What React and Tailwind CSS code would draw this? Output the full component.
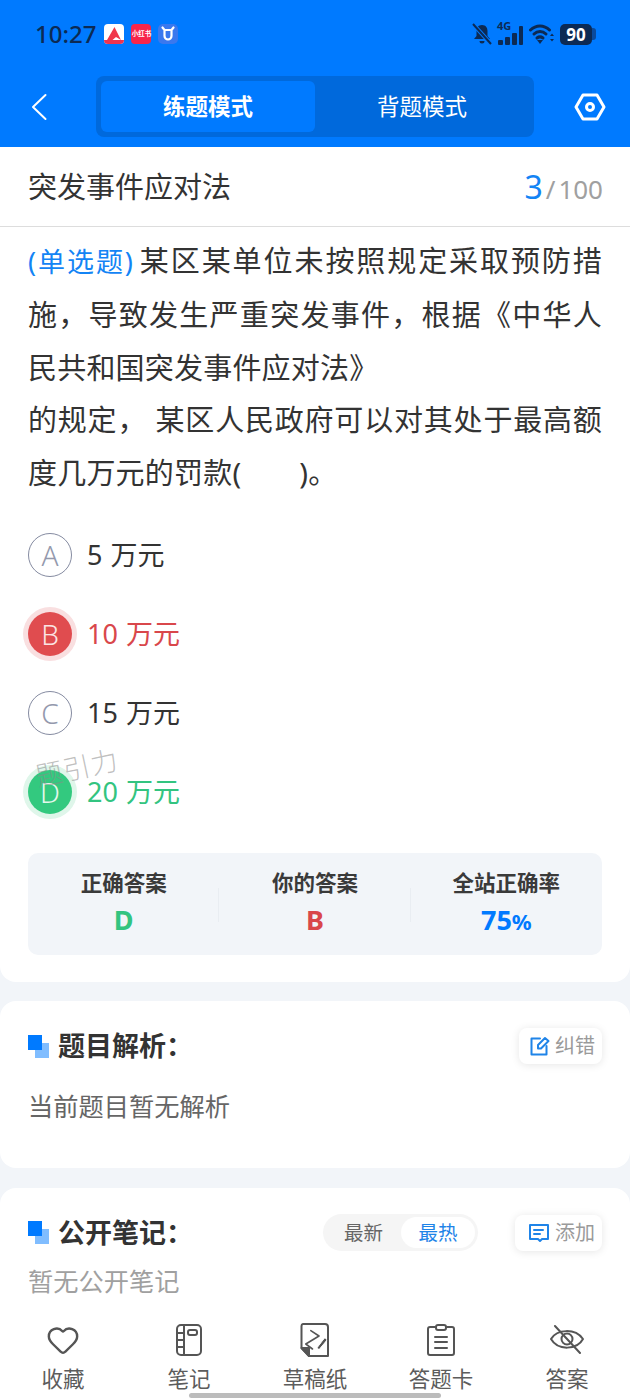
import React from "react";
import { Heart } from "lucide-react";

const font = { fontFamily: '"Noto Sans", "Noto Sans CJK SC", sans-serif' };

const options = [
  { key: "A", text: "5 万元", state: "idle" },
  { key: "B", text: "10 万元", state: "wrong" },
  { key: "C", text: "15 万元", state: "idle" },
  { key: "D", text: "20 万元", state: "right" },
];

const Option = ({ item }) => {
  let circle = "border-[1.5px] border-[#858ba1] text-[#9499ad]";
  let label = "text-[#333333]";
  if (item.state === "wrong") {
    circle = "bg-[#e04c4f] text-[#fbe4e4] shadow-[0_0_0_5px_#f9dfe0]";
    label = "text-[#d9474b]";
  }
  if (item.state === "right") {
    circle = "bg-[#33c97f] text-[#e3f8ec] shadow-[0_0_0_5px_#dff6ea]";
    label = "text-[#33c480]";
  }
  return (
    <div className="flex items-center h-[44px]">
      <div className={`w-[44px] h-[44px] rounded-full flex items-center justify-center text-[28px] font-light ${circle}`}>
        {item.key}
      </div>
      <div className={`ml-[15px] text-[27px] leading-[44px] [word-spacing:1px] ${label}`}>{item.text}</div>
    </div>
  );
};

const Stat = ({ title, children, line }) => (
  <div className="flex-1 flex flex-col items-center relative">
    <div className="text-[21.5px] leading-[30px] font-bold text-[#3a3a3a]">{title}</div>
    <div className="text-[27px] leading-[38px] font-bold mt-[3px]">{children}</div>
    {line && <div className="absolute right-0 top-[20px] w-[1px] h-[34px] bg-[#e9edf2]" />}
  </div>
);

const SectionTitle = ({ children }) => (
  <div className="flex items-center">
    <div className="relative w-[21px] h-[23px]">
      <div className="absolute left-[7px] top-[8px] w-[14px] h-[15px] bg-[#80bdff]" />
      <div className="absolute left-0 top-0 w-[14px] h-[15px] bg-[#007aff]" />
    </div>
    <div className="ml-[9px] text-[27px] leading-[36px] font-bold text-[#333333]">{children}</div>
  </div>
);

const ChipButton = ({ icon, label, wide }) => (
  <div className={`flex items-center justify-end pr-[7px] h-[36px] rounded-[8px] bg-white shadow-[0_1px_8px_rgba(0,0,0,0.1)] text-[20px] text-[#9a9a9a] ${wide ? "w-[87px]" : "w-[83px]"}`}>
    {icon}
    <span className="ml-[5px]">{label}</span>
  </div>
);

const Tab = ({ icon, label }) => (
  <div className="flex-1 flex flex-col items-center">
    <div className="h-[34px] flex items-center justify-center">{icon}</div>
    <div className="mt-[8px] text-[21.5px] leading-[28px] text-[#5c5c5c]">{label}</div>
  </div>
);

const tabStroke = { fill: "none", stroke: "#555555", strokeWidth: 2, strokeLinecap: "round", strokeLinejoin: "round" };

const App = () => {
  return (
    <div className="w-[630px] h-[1400px] relative overflow-hidden flex flex-col bg-[#f2f5f9]" style={font}>
      <div className="h-[147px] bg-[#007aff] shrink-0">
        <div className="h-[68px] pl-[35px] pr-[34px] flex items-center justify-between text-[#0c2a54]">
          <div className="flex items-center">
            <span className="text-[24px] font-medium leading-none">10:27</span>
            <div className="ml-[8px] w-[20px] h-[20px] rounded-[4px] bg-white overflow-hidden flex flex-col items-center justify-end">
              <svg width="16" height="13" viewBox="0 0 16 13"><path d="M8.5 0 L15 13 L10 10 L6.5 13 H1 Z" fill="#f0384a" /></svg>
              <div className="w-full h-[4px] bg-[#ee3350]" />
            </div>
            <div className="ml-[7px] w-[20px] h-[20px] rounded-[4px] bg-[#f7254a] flex items-center justify-center text-white text-[6.5px] leading-none font-bold whitespace-nowrap">小红书</div>
            <div className="ml-[7px] w-[20px] h-[20px] rounded-[5px] bg-[#3a78ee] flex items-center justify-center">
              <svg width="14" height="16" viewBox="0 0 14 16" fill="none" stroke="white" strokeWidth="2.2" strokeLinecap="round" strokeLinejoin="round">
                <path d="M1.5 1.5 L3.5 4 H10.5 L12.5 1.5 M3.5 4 V10 A3.5 3.5 0 0 0 10.5 10 V4" />
              </svg>
            </div>
          </div>
          <div className="flex items-center">
            <svg width="20" height="22" viewBox="0 0 20 22" fill="#0c2a54">
              <path d="M10 2 C6 2 4.5 5 4.5 8 V13 L2 16 H18 L15.5 13 V8 C15.5 5 14 2 10 2 Z" />
              <path d="M7.5 18 H12.5 A2.5 2.5 0 0 1 7.5 18 Z" />
              <path d="M1 1 L19 21" stroke="#007aff" strokeWidth="4" />
              <path d="M1 1 L19 21" stroke="#0c2a54" strokeWidth="2" />
            </svg>
            <div className="ml-[5px] relative w-[26px] h-[22px]">
              <span className="absolute left-0 top-[-3px] text-[11px] font-bold leading-[12px]">4G</span>
              <div className="absolute left-[1px] bottom-0 flex items-end gap-[2px]">
                <div className="w-[5px] h-[5px] bg-[#0c2a54] rounded-[1px]" />
                <div className="w-[5px] h-[8px] bg-[#0c2a54] rounded-[1px]" />
                <div className="w-[5px] h-[12px] bg-[#0c2a54] rounded-[1px]" />
                <div className="w-[4px] h-[19px] bg-[#0c2a54] rounded-[1px]" />
              </div>
            </div>
            <svg className="ml-[6px]" width="26" height="22" viewBox="0 0 26 22" fill="none" stroke="#0c2a54" strokeWidth="3" strokeLinecap="round">
              <path d="M1.5 7 C7 1.5 15 1.5 20.5 7" />
              <path d="M5 11 C8.5 7.5 13.5 7.5 17 11" />
              <path d="M8 15 C10 13.5 12 13.5 14 15" />
              <path d="M8 17 L11 21 L14 17 Z" fill="#0c2a54" stroke="none" />
              <path d="M21 13 L23 10.5 L25 13 Z M21 16 L23 18.5 L25 16 Z" fill="#0c2a54" stroke="none" />
            </svg>
            <div className="ml-[5px] flex items-center">
              <div className="w-[32px] h-[21px] rounded-[5px] bg-[#0c2a54] text-white text-[17px] font-bold leading-[21px] text-center">90</div>
              <div className="w-[4px] h-[12px] rounded-r-[3px] bg-[#0a4a9c]" />
            </div>
          </div>
        </div>
        <div className="h-[61px] mt-[8px] flex items-center relative">
          <svg className="absolute left-[31px] top-[17px]" width="16" height="28" viewBox="0 0 16 28" fill="none" stroke="white" strokeWidth="2" strokeLinecap="round" strokeLinejoin="round">
            <path d="M14.5 2 L2 14 L14.5 26" />
          </svg>
          <div className="ml-[96px] w-[438px] h-[61px] rounded-[8px] bg-[#0069dc] p-[5px] flex text-[22.5px] text-white">
            <div className="w-[214px] rounded-[6px] bg-[#007aff] font-bold flex items-center justify-center">练题模式</div>
            <div className="flex-1 flex items-center justify-center">背题模式</div>
          </div>
          <svg className="ml-[40px]" width="32" height="28" viewBox="0 0 32 28" fill="none" stroke="white" strokeWidth="3" strokeLinejoin="round">
            <path d="M9 2 H23 L30 14 L23 26 H9 L2 14 Z" />
            <circle cx="16" cy="14" r="3.5" />
          </svg>
        </div>
      </div>

      <div className="bg-white rounded-b-[16px] shrink-0 h-[835px]">
        <div className="h-[80px] px-[27px] border-b border-[#dddddd] flex items-center justify-between">
          <div className="text-[29px] text-[#333333] ml-[1px]">突发事件应对法</div>
          <div className="flex items-baseline text-[#a0a0a0]">
            <span className="text-[32px] text-[#1384f5]">3</span>
            <span className="text-[26px] ml-[3px] mr-[3px]">/</span>
            <span className="text-[26px]">100</span>
          </div>
        </div>
        <div className="px-[28px] pt-[8px] text-[29px] leading-[52.8px] text-[#333333] text-justify tracking-[0.2px]">
          <span className="text-[#1384f5] text-[27px] mr-[5px]">(单选题)</span>某区某单位未按照规定采取预防措施，导致发生严重突发事件，根据《中华人民共和国突发事件应对法》
          <br />
          的规定， 某区人民政府可以对其处于最高额度几万元的罚款(<span className="inline-block w-[58px]" />)。
        </div>
        <div className="px-[28px] mt-[33px] flex flex-col gap-[35px]">
          {options.map((item) => (
            <Option key={item.key} item={item} />
          ))}
        </div>
        <div className="mx-[28px] h-[102px] mt-[39px] rounded-[10px] bg-[#f2f5f9] flex pt-[15px]">
          <Stat title="正确答案" line><span className="text-[#33c480]">D</span></Stat>
          <Stat title="你的答案" line><span className="text-[#d9474b]">B</span></Stat>
          <Stat title="全站正确率">
            <span className="text-[#007aff]">75<span className="text-[22px]">%</span></span>
          </Stat>
        </div>
      </div>

      <div className="bg-white rounded-[16px] shrink-0 h-[167px] mt-[19px] px-[28px] pt-[27px]">
        <div className="flex items-center justify-between">
          <SectionTitle>题目解析：</SectionTitle>
          <ChipButton
            label="纠错"
            icon={
              <svg width="20" height="20" viewBox="0 0 20 20" fill="none" stroke="#1f84e8" strokeWidth="2" strokeLinejoin="round" strokeLinecap="round">
                <path d="M10 2.5 H1.5 V18.5 H16.5 V10" />
                <path d="M8 9 L15 2 L18.5 5 L11 12.5 L8 12.5 Z" />
              </svg>
            }
          />
        </div>
        <div className="mt-[24px] text-[25.25px] leading-[36px] text-[#666666]">当前题目暂无解析</div>
      </div>

      <div className="flex-1 bg-white rounded-t-[16px] mt-[20px] px-[28px] pt-[26px]">
        <div className="flex items-center">
          <SectionTitle>公开笔记：</SectionTitle>
          <div className="ml-auto w-[155px] h-[37px] rounded-full bg-[#f5f5f5] p-[3px] flex text-[19.5px]">
            <div className="w-[75px] flex items-center justify-center text-[#666666]">最新</div>
            <div className="flex-1 rounded-full bg-white flex items-center justify-center text-[#1f84e8]">最热</div>
          </div>
          <div className="ml-[37px]">
            <ChipButton
              wide
              label="添加"
              icon={
                <svg width="22" height="20" viewBox="0 0 22 20" fill="none" stroke="#1f84e8" strokeWidth="2" strokeLinejoin="round" strokeLinecap="round">
                  <path d="M2 2 H20 V16 H14 L12 18 L10 16 H2 Z" />
                  <path d="M6 7 H15 M6 11 H12" />
                </svg>
              }
            />
          </div>
        </div>
        <div className="mt-[12px] text-[25.25px] leading-[36px] text-[#a0a0a0]">暂无公开笔记</div>
      </div>

      <div className="absolute left-0 right-0 bottom-0 h-[95px] bg-white flex px-0 pt-[18px]">
        <Tab label="收藏" icon={<Heart size={34} strokeWidth={1.7} color="#555555" />} />
        <Tab
          label="笔记"
          icon={
            <svg width="26" height="32" viewBox="0 0 26 32" {...tabStroke}>
              <rect x="1" y="1" width="24" height="30" rx="4" />
              <path d="M8 1 V31 M1 9 H8 M1 16 H8 M1 23 H8" />
              <rect x="12" y="6" width="9" height="5" rx="2" />
            </svg>
          }
        />
        <Tab
          label="草稿纸"
          icon={
            <svg width="30" height="34" viewBox="0 0 30 34" {...tabStroke}>
              <path d="M3 1 H25 A3 3 0 0 1 28 4 V33 H9 L1.5 25 V3 A2 2 0 0 1 3 1 Z" />
              <path d="M9 33 V25 H1.5 Z" fill="#555555" />
              <path d="M10.8 7.7 L19 13 L5.8 21 L12.5 26" strokeWidth="1.6" />
              <path d="M17 25 L24.5 15 L27 17 L19.5 26 Z" fill="#555555" stroke="white" strokeWidth="1" />
              <path d="M17.5 25 L25 15.5 L26.5 16.8 L19 25.8 Z" fill="#555555" stroke="none" />
            </svg>
          }
        />
        <Tab
          label="答题卡"
          icon={
            <svg width="28" height="32" viewBox="0 0 28 32" {...tabStroke}>
              <path d="M8 3 H3 A2 2 0 0 0 1 5 V29 A2 2 0 0 0 3 31 H25 A2 2 0 0 0 27 29 V5 A2 2 0 0 0 25 3 H20" />
              <rect x="9" y="1" width="10" height="5" rx="2" />
              <path d="M8 13 H20 M8 18 H20 M8 24 H20" />
            </svg>
          }
        />
        <Tab
          label="答案"
          icon={
            <svg width="36" height="30" viewBox="0 0 36 30" {...tabStroke}>
              <path d="M2 14 C8 4 26 3 34 14 C28 25 9 26 2 14 Z" />
              <circle cx="18" cy="14" r="5.5" />
              <path d="M6 1 L31 28" />
            </svg>
          }
        />
      </div>

      <div className="absolute left-[189px] bottom-[2px] w-[252px] h-[5px] rounded-full bg-[#bcbcbc]" />
      <div className="absolute left-[35px] top-[750px] text-[27px] leading-[36px] tracking-[1px] font-light text-[#8a8a8a]/55 -rotate-12">题引力</div>
    </div>
  );
};

export default App;
